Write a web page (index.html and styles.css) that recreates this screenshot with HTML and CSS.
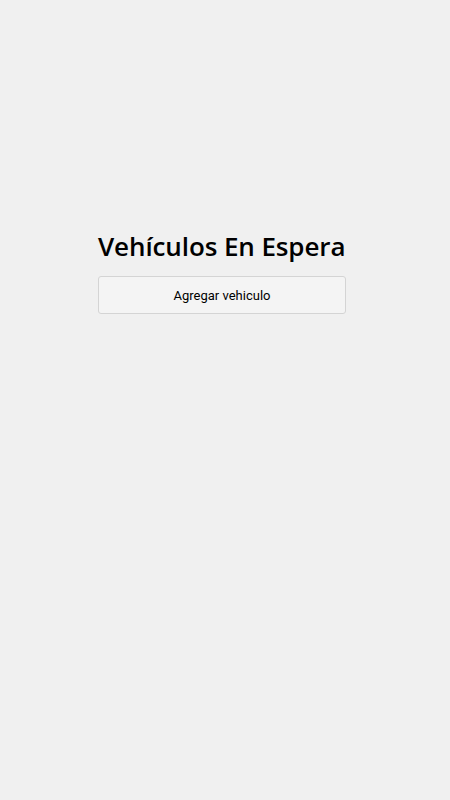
FILE: index.html
```html
<!DOCTYPE html>
<html lang="es">
<head>
    <meta charset="UTF-8">
    <meta name="viewport" content="width=device-width, initial-scale=1.0">
    <title>Vehículos En Espera</title>
    <link rel="stylesheet" href="styles.css">
</head>
<body>
    <div class="panel">
        <h1>Vehículos En Espera</h1>
        <button type="button" class="add-btn">Agregar vehiculo</button>
    </div>
</body>
</html>
```

FILE: styles.css
```css
* { margin: 0; padding: 0; box-sizing: border-box; }
body { font-family: Roboto, "Liberation Sans", sans-serif; background-color: #f0f0f0; color: #000; padding: 226px 6px 0 0; }
.panel { width: 248px; margin: 0 auto; display: flex; flex-direction: column; gap: 10px; }
h1 { font-family: "Open Sans", "Liberation Sans", sans-serif; font-size: 26px; font-weight: 600; line-height: 40px; letter-spacing: -0.1px; color: #000; white-space: nowrap; }
.add-btn { width: 100%; height: 38px; background-color: #f4f4f4; border: 1px solid #d4d4d4; border-radius: 3px; font-family: Roboto, sans-serif; font-size: 13px; color: #000; cursor: pointer; }
```
